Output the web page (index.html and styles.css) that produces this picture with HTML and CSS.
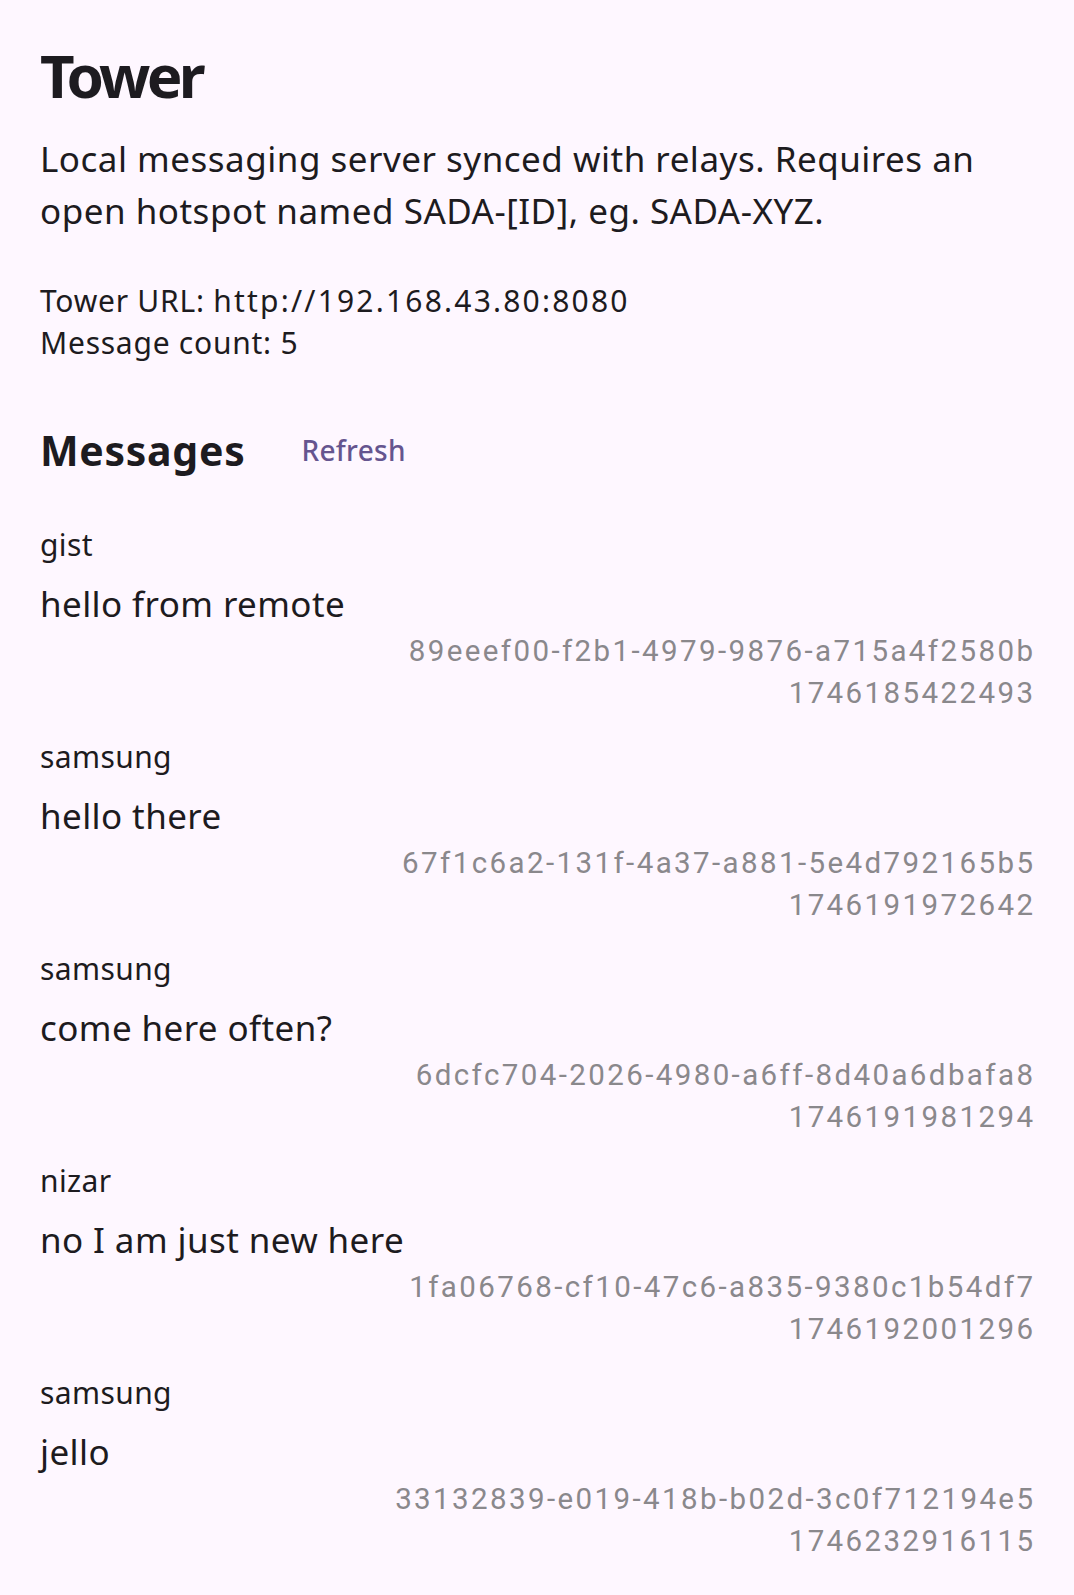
FILE: index.html
```html
<!DOCTYPE html>
<html lang="en">
<head>
<meta charset="utf-8">
<title>Tower</title>
<link rel="stylesheet" href="styles.css">
</head>
<body>
<main class="screen">
  <h1 class="title">Tower</h1>
  <p class="desc">Local messaging server synced with relays. Requires an open hotspot named SADA-[ID], eg. SADA-XYZ.</p>
  <div class="info">
    <div>Tower URL: <span class="url">http://192.168.43.80:8080</span></div>
    <div>Message count: 5</div>
  </div>
  <div class="section-head">
    <h2 class="section-title">Messages</h2>
    <button class="refresh" type="button">Refresh</button>
  </div>
  <ul class="messages">
    <li class="msg">
      <div class="sender">gist</div>
      <div class="body">hello from remote</div>
      <div class="meta">89eeef00-f2b1-4979-9876-a715a4f2580b</div>
      <div class="meta">1746185422493</div>
    </li>
    <li class="msg">
      <div class="sender">samsung</div>
      <div class="body">hello there</div>
      <div class="meta">67f1c6a2-131f-4a37-a881-5e4d792165b5</div>
      <div class="meta">1746191972642</div>
    </li>
    <li class="msg">
      <div class="sender">samsung</div>
      <div class="body">come here often?</div>
      <div class="meta">6dcfc704-2026-4980-a6ff-8d40a6dbafa8</div>
      <div class="meta">1746191981294</div>
    </li>
    <li class="msg">
      <div class="sender">nizar</div>
      <div class="body">no I am just new here</div>
      <div class="meta">1fa06768-cf10-47c6-a835-9380c1b54df7</div>
      <div class="meta">1746192001296</div>
    </li>
    <li class="msg">
      <div class="sender">samsung</div>
      <div class="body">jello</div>
      <div class="meta">33132839-e019-418b-b02d-3c0f712194e5</div>
      <div class="meta">1746232916115</div>
    </li>
  </ul>
</main>
</body>
</html>
```
FILE: styles.css
```css
html, body {
  margin: 0;
  padding: 0;
  background: #fef7ff;
}
body {
  font-family: "Noto Sans", "Open Sans", sans-serif;
  color: #1d1b20;
}
.screen {
  padding: 39px 41px 0 40px;
}
.title {
  margin: 0;
  font-size: 60px;
  line-height: 72px;
  font-weight: 700;
  letter-spacing: -3.8px;
}
.desc {
  margin: 22px 0 0;
  font-size: 35px;
  line-height: 52px;
  letter-spacing: 0.5px;
}
.info {
  margin-top: 43px;
  font-size: 30px;
  line-height: 42px;
  letter-spacing: 0.75px;
}
.url {
  letter-spacing: 2.2px;
}
.section-head {
  margin-top: 58px;
  display: flex;
  align-items: center;
  gap: 56px;
  height: 56px;
}
.section-title {
  margin: 0;
  font-size: 41px;
  line-height: 56px;
  font-weight: 700;
  letter-spacing: 0.7px;
}
.refresh {
  border: 0;
  background: none;
  padding: 0;
  font-family: inherit;
  font-size: 28px;
  line-height: 40px;
  font-weight: 500;
  color: #65558f;
  letter-spacing: 0.3px;
}
.messages {
  list-style: none;
  margin: 46px 0 0;
  padding: 0;
}
.msg {
  margin-bottom: 22px;
}
.sender {
  font-size: 30px;
  line-height: 42px;
  letter-spacing: 0.4px;
}
.body {
  margin-top: 12px;
  font-size: 35px;
  line-height: 52px;
  letter-spacing: 0.4px;
}
.meta {
  margin-right: -2.4px;
  text-align: right;
  font-family: Roboto, "Liberation Sans", sans-serif;
  font-size: 29.5px;
  line-height: 42px;
  letter-spacing: 2.4px;
  color: #8a888c;
}
```
